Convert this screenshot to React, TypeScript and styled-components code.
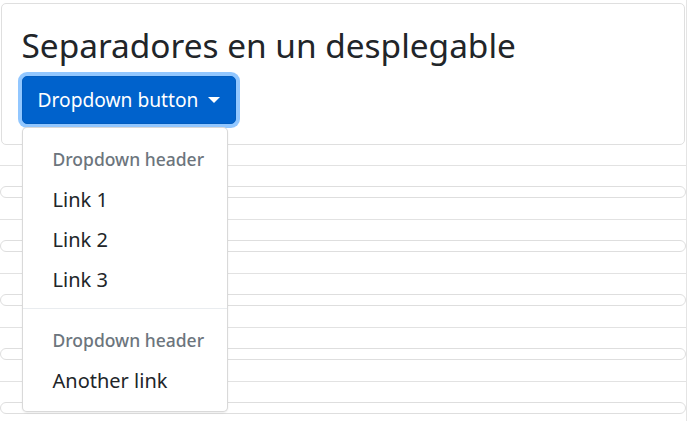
import React from 'react';
import styled, { createGlobalStyle } from 'styled-components';

const Global = createGlobalStyle`
  html, body { margin: 0; padding: 0; background: #fff; }
  body {
    font-family: "Noto Sans", "Open Sans", sans-serif;
    color: #212529;
  }
`;

const Page = styled.div`
  position: relative;
  width: 687px;
  height: 421px;
  box-sizing: border-box;
  border-right: 1px solid #e4e4e4;
  padding-top: 3px;
  overflow: hidden;
`;

const Card = styled.section`
  margin-left: 1px;
  width: 684px;
  box-sizing: border-box;
  border: 1px solid #dfdfdf;
  border-radius: 5px;
  padding: 20px 20px 20px 19.5px;
`;

const Title = styled.h3`
  margin: 0 0 10px;
  font-size: 33.4px;
  line-height: 42px;
  font-weight: 400;
  color: #212529;
`;

const Dropdown = styled.div`
  position: relative;
  display: inline-block;
`;

const ToggleButton = styled.button`
  display: inline-flex;
  align-items: center;
  height: 47.5px;
  box-sizing: border-box;
  padding: 0 15px;
  font-family: inherit;
  font-size: 19.2px;
  line-height: 30px;
  color: #fff;
  background: #0062cc;
  border: 1px solid #005cbf;
  border-radius: 5px;
  box-shadow: 0 0 0 4px rgba(38, 143, 255, 0.5);
  cursor: pointer;
`;

const Caret = styled.span`
  display: inline-block;
  margin-left: 10px;
  width: 0;
  height: 0;
  border-top: 6px solid #fff;
  border-left: 6px solid transparent;
  border-right: 6px solid transparent;
`;

const Menu = styled.div`
  position: absolute;
  top: 100%;
  left: 0;
  margin-top: 3px;
  width: 206px;
  box-sizing: border-box;
  padding: 10px 0;
  background: #fff;
  border: 1px solid rgba(0, 0, 0, 0.15);
  border-radius: 5px;
  box-shadow: 0 1px 2px rgba(0, 0, 0, 0.08);
  z-index: 10;
`;

const MenuHeader = styled.h6`
  margin: 0;
  padding: 8px 30px;
  font-size: 17.5px;
  line-height: 26px;
  font-weight: 500;
  color: #6c757d;
  white-space: nowrap;
`;

const MenuItem = styled.a`
  display: block;
  padding: 5px 30px;
  font-size: 20px;
  line-height: 30px;
  color: #212529;
  text-decoration: none;
  white-space: nowrap;
`;

const Divider = styled.div`
  margin: 8px 0 10px;
  height: 0;
  border-top: 1px solid #e9ecef;
`;

const Strips = styled.div`
  margin-top: 20px;
`;

const Strip = styled.div`
  height: 54px;
  box-sizing: border-box;
  border-top: 1px solid #e2e2e2;
  padding-top: 20px;
`;

const Pill = styled.div`
  width: 686px;
  height: 12px;
  box-sizing: border-box;
  border: 1px solid #dedede;
  border-radius: 6px;
`;

export default function App() {
  return (
    <>
      <Global />
      <Page>
        <Card>
          <Title>Separadores en un desplegable</Title>
          <Dropdown>
            <ToggleButton type="button">
              Dropdown button
              <Caret />
            </ToggleButton>
            <Menu>
              <MenuHeader>Dropdown header</MenuHeader>
              <MenuItem href="#">Link 1</MenuItem>
              <MenuItem href="#">Link 2</MenuItem>
              <MenuItem href="#">Link 3</MenuItem>
              <Divider />
              <MenuHeader>Dropdown header</MenuHeader>
              <MenuItem href="#">Another link</MenuItem>
            </Menu>
          </Dropdown>
        </Card>
        <Strips>
          {[0, 1, 2, 3, 4].map((i) => (
            <Strip key={i}>
              <Pill />
            </Strip>
          ))}
        </Strips>
      </Page>
    </>
  );
}
